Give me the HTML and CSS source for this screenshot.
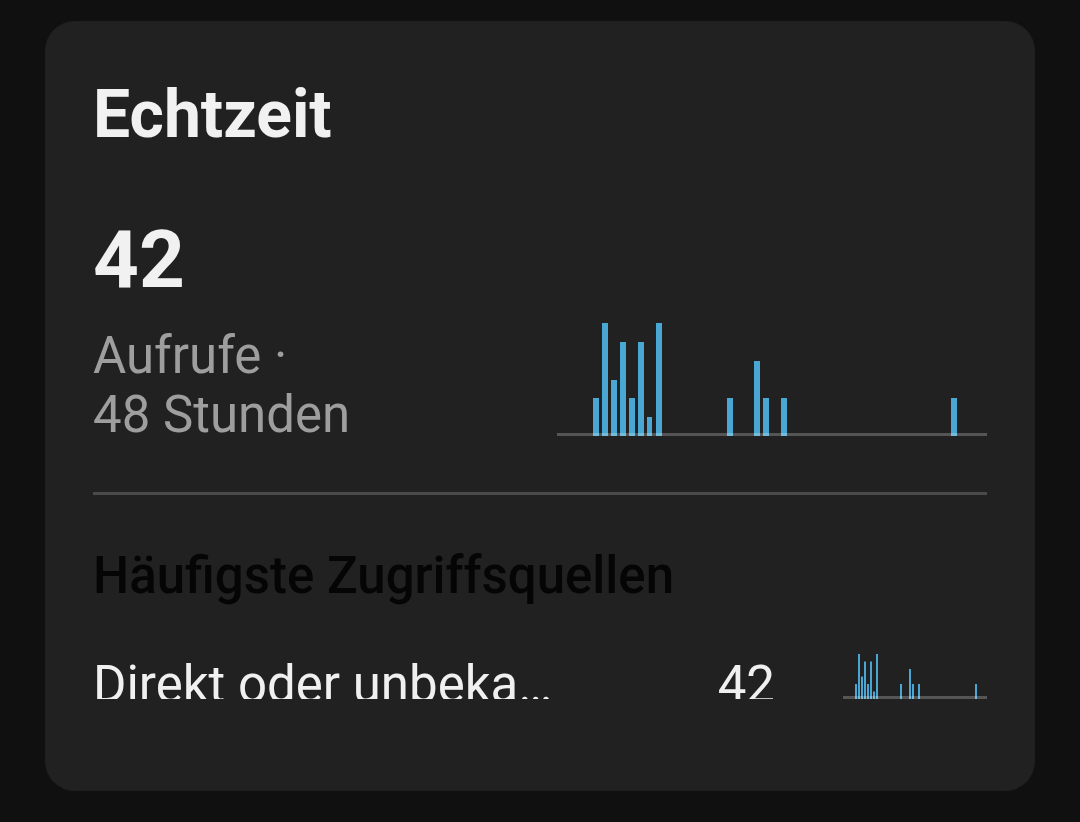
FILE: index.html
```html
<!DOCTYPE html>
<html lang="de">
<head>
<meta charset="utf-8">
<title>Echtzeit</title>
<link rel="stylesheet" href="styles.css">
</head>
<body>
<section class="card">
  <h1 class="title">Echtzeit</h1>
  <div class="big-number">42</div>
  <div class="stats-row">
    <div class="stats-label">Aufrufe ·<br>48 Stunden</div>
    <svg class="chart-big" width="430" height="113" viewBox="0 0 430 113">
      <g fill="#4aa6d2">
        <rect x="36" y="75" width="6" height="38"/>
        <rect x="45" y="0" width="6" height="113"/>
        <rect x="54" y="57" width="6" height="56"/>
        <rect x="63" y="19" width="6" height="94"/>
        <rect x="72" y="75" width="6" height="38"/>
        <rect x="81" y="19" width="6" height="94"/>
        <rect x="90" y="94" width="5" height="19"/>
        <rect x="99" y="0" width="6" height="113"/>
        <rect x="170" y="75" width="6" height="38"/>
        <rect x="197" y="38" width="6" height="75"/>
        <rect x="206" y="75" width="6" height="38"/>
        <rect x="224" y="75" width="6" height="38"/>
        <rect x="394" y="75" width="6" height="38"/>
      </g>
      <rect x="0" y="110" width="430" height="3" fill="rgba(255,255,255,0.235)"/>
    </svg>
  </div>
  <div class="divider"></div>
  <h2 class="section-title">Häufigste Zugriffsquellen</h2>
  <div class="source-row">
    <div class="source-name">Direkt oder unbekannt</div>
    <div class="source-count">42</div>
    <svg class="chart-small" width="144" height="45" viewBox="0 0 144 45">
      <g fill="#4aa6d2">
        <rect x="12" y="30" width="2" height="15"/>
        <rect x="15" y="0" width="2" height="45"/>
        <rect x="18" y="22.5" width="2" height="22.5"/>
        <rect x="21" y="7.5" width="2" height="37.5"/>
        <rect x="24" y="30" width="2" height="15"/>
        <rect x="27" y="7.5" width="2" height="37.5"/>
        <rect x="30" y="37.5" width="2" height="7.5"/>
        <rect x="33" y="0" width="2" height="45"/>
        <rect x="57" y="30" width="2" height="15"/>
        <rect x="66" y="15" width="2" height="30"/>
        <rect x="69" y="30" width="2" height="15"/>
        <rect x="75" y="30" width="2" height="15"/>
        <rect x="132" y="30" width="2" height="15"/>
      </g>
      <rect x="0" y="42" width="144" height="3" fill="rgba(255,255,255,0.235)"/>
    </svg>
  </div>
</section>
</body>
</html>
```

FILE: styles.css
```css
html, body {
  margin: 0;
  padding: 0;
  background: #101010;
}

body {
  width: 1080px;
  height: 822px;
  overflow: hidden;
  font-family: Roboto, "Noto Sans", "Liberation Sans", sans-serif;
}

.card {
  box-sizing: border-box;
  margin: 21px 0 0 45px;
  width: 990px;
  height: 770px;
  border-radius: 30px;
  background: #212121;
  padding: 61px 48px 0 48px;
  display: flex;
  flex-direction: column;
}

.title {
  margin: 0;
  font-size: 66px;
  line-height: 66px;
  font-weight: 700;
  color: #f1f1f1;
}

.big-number {
  margin-top: 72px;
  font-size: 80px;
  line-height: 80px;
  font-weight: 700;
  color: #f1f1f1;
}

.stats-row {
  margin-top: 23px;
  display: flex;
  justify-content: space-between;
  align-items: flex-end;
}

.stats-label {
  font-size: 51px;
  line-height: 59px;
  color: #9e9e9e;
}

.chart-big {
  display: block;
  margin-bottom: 8px;
}

.divider {
  margin-top: 48px;
  height: 3px;
  background: #4a4a4a;
}

.section-title {
  margin: 55px 0 0 0;
  font-size: 51px;
  line-height: 51px;
  font-weight: 500;
  color: #050505;
}

.source-row {
  margin-top: 53px;
  display: flex;
  align-items: flex-end;
}

.source-name,
.source-count {
  height: 40px;
  overflow: hidden;
  font-size: 51px;
  line-height: 51px;
  color: #f0f0f0;
  white-space: nowrap;
}

.source-name {
  width: 460px;
  flex: none;
  text-overflow: ellipsis;
}

.source-count {
  width: 222px;
  flex: none;
  text-align: right;
}

.chart-small {
  display: block;
  margin-left: 68px;
  flex: none;
}
```
